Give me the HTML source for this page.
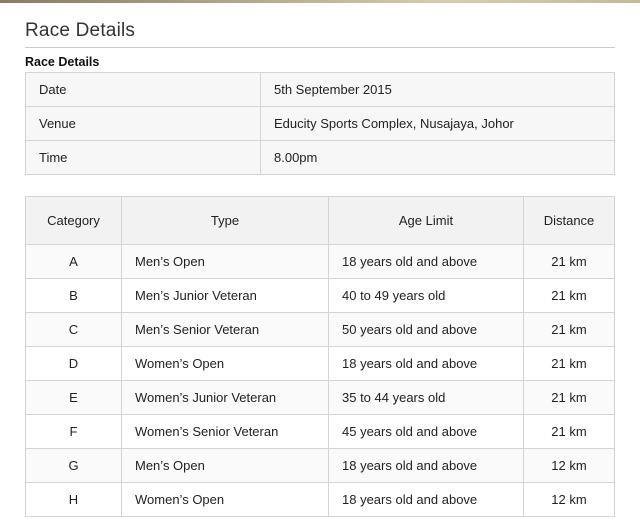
<!DOCTYPE html>
<html><head><style>
body{margin:0;width:640px;height:519px;background:#fff;font-family:"Liberation Sans",sans-serif;color:#222;position:relative;overflow:hidden}
.top{position:absolute;left:0;top:0;width:640px;height:3px;background:linear-gradient(90deg,#8a7a66,#b8a88e 40%,#d9cbb0 70%,#c8b898)}
h1{position:absolute;left:25px;top:20px;margin:0;font-size:19px;font-weight:normal;color:#333;letter-spacing:.2px}
.hr{position:absolute;left:25px;top:47px;width:590px;height:1px;background:#ccc}
h2{position:absolute;left:25px;top:55px;margin:0;font-size:12.5px;font-weight:bold;color:#111}
table{position:absolute;border-collapse:collapse;font-size:13px;color:#222}
td,th{border:1px solid #d4d4d4;padding:0}
#t1{left:25px;top:72px;width:590px}
#t1 td{height:33px;background:#f7f7f7;padding-left:13px}
#t2{left:25px;top:196px;width:590px}
#t2 th{height:47px;background:#f2f2f2;font-weight:normal}
#t2 td{height:33px;background:#fff}
#t2 tr:nth-child(even) td{background:#fafafa}
.c{text-align:center}.l{padding-left:13px!important}
</style></head><body>
<div class="top"></div>
<h1>Race Details</h1>
<div class="hr"></div>
<h2>Race Details</h2>
<table id="t1">
<tr><td style="width:221px">Date</td><td>5th September 2015</td></tr>
<tr><td>Venue</td><td>Educity Sports Complex, Nusajaya, Johor</td></tr>
<tr><td>Time</td><td>8.00pm</td></tr>
</table>
<table id="t2">
<tr><th style="width:95px">Category</th><th style="width:206px">Type</th><th style="width:194px">Age Limit</th><th>Distance</th></tr>
<tr><td class="c">A</td><td class="l">Men’s Open</td><td class="l">18 years old and above</td><td class="c">21 km</td></tr>
<tr><td class="c">B</td><td class="l">Men’s Junior Veteran</td><td class="l">40 to 49 years old</td><td class="c">21 km</td></tr>
<tr><td class="c">C</td><td class="l">Men’s Senior Veteran</td><td class="l">50 years old and above</td><td class="c">21 km</td></tr>
<tr><td class="c">D</td><td class="l">Women’s Open</td><td class="l">18 years old and above</td><td class="c">21 km</td></tr>
<tr><td class="c">E</td><td class="l">Women’s Junior Veteran</td><td class="l">35 to 44 years old</td><td class="c">21 km</td></tr>
<tr><td class="c">F</td><td class="l">Women’s Senior Veteran</td><td class="l">45 years old and above</td><td class="c">21 km</td></tr>
<tr><td class="c">G</td><td class="l">Men’s Open</td><td class="l">18 years old and above</td><td class="c">12 km</td></tr>
<tr><td class="c">H</td><td class="l">Women’s Open</td><td class="l">18 years old and above</td><td class="c">12 km</td></tr>
</table>
</body></html>
